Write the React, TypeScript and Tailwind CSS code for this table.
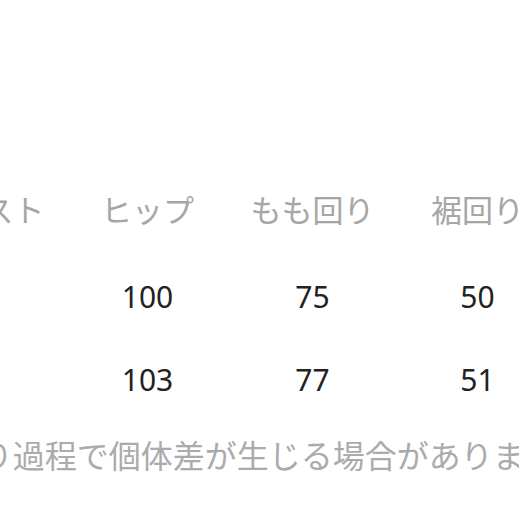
import React from "react";

const headers = ["ウエスト", "ヒップ", "もも回り", "裾回り", "股下"];
const rows = [
  ["68", "100", "75", "50", "70"],
  ["70", "103", "77", "51", "71"],
];

export default function App() {
  return (
    <div
      className="w-[519px] h-[519px] overflow-hidden bg-white pt-[190px]"
      style={{ fontFamily: '"Noto Sans", "Noto Sans CJK JP", sans-serif' }}
    >
      <div className="ml-[-100px] w-max flex flex-col">
        <div className="grid grid-cols-[repeat(5,165px)] h-[40px] text-[31px] leading-[40px] text-[#a6a6a6] whitespace-nowrap">
          {headers.map((h) => (
            <div key={h} className="text-center">
              {h}
            </div>
          ))}
        </div>
        <div className="mt-[47px] grid grid-cols-[repeat(5,165px)] h-[40px] text-[30px] leading-[40px] text-[#222222]">
          {rows[0].map((v, i) => (
            <div key={i} className="text-center">
              {v}
            </div>
          ))}
        </div>
        <div className="mt-[43px] grid grid-cols-[repeat(5,165px)] h-[40px] text-[30px] leading-[40px] text-[#222222]">
          {rows[1].map((v, i) => (
            <div key={i} className="text-center">
              {v}
            </div>
          ))}
        </div>
      </div>
      <p className="mt-[36px] ml-[-110px] whitespace-nowrap text-[32px] leading-[40px] text-[#ababab]">
        ※手作り過程で個体差が生じる場合があります。
      </p>
    </div>
  );
}
